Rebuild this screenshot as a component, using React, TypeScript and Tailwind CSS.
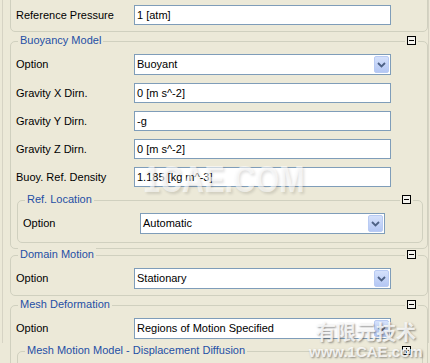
import { ReactNode } from "react";

type GroupProps = {
    title?: string,
    icon?: 'minus' | 'plus',
    className: string,
    children?: ReactNode
}

const ToggleBox = ({ kind }: { kind: 'minus' | 'plus' }) => (
    <span className="block w-[9px] h-[9px] border border-black bg-[#F4F3EE] relative">
        <span className="absolute left-[1px] top-[3px] w-[5px] h-[1px] bg-black" />
        {kind === 'plus' && <span className="absolute left-[3px] top-[1px] w-[1px] h-[5px] bg-black" />}
    </span>
)

const Group = ({ title, icon, className, children }: GroupProps) => (
    <div className={`relative border border-[#D0D0BF] rounded-[5px] ${className}`}>
        {title && (
            <span className="absolute -top-[8px] left-[7px] px-[2px] bg-[#ECE9D8] leading-[13px] text-[#1F4FA5] whitespace-nowrap">
                {title}
            </span>
        )}
        {icon && (
            <span className="absolute -top-[6px] right-[9px] px-[2px] bg-[#ECE9D8]">
                <ToggleBox kind={icon} />
            </span>
        )}
        {children}
    </div>
)

const Chevron = () => (
    <svg width="9" height="6" viewBox="0 0 9 6">
        <path d="M1 1 L4.5 4.5 L8 1" stroke="#4D6185" strokeWidth="1.8" fill="none" />
    </svg>
)

const TextField = ({ value, className = '' }: { value: string, className?: string }) => (
    <div className={`h-[20px] border border-[#7F9DB9] bg-white flex items-center pl-[2px] ${className}`}>
        {value}
    </div>
)

const Combo = ({ value, className = '' }: { value: string, className?: string }) => (
    <div className={`h-[21px] border border-[#7F9DB9] bg-white flex items-stretch ${className}`}>
        <span className="flex-1 flex items-center pl-[2px] whitespace-nowrap overflow-hidden">{value}</span>
        <span className="w-[15px] m-[1px] ml-0 rounded-[2px] border border-[#B9CBF3] bg-gradient-to-b from-[#D5E1FB] to-[#B4C7F4] flex items-center justify-center">
            <Chevron />
        </span>
    </div>
)

const Row = ({ label, children, cols = 'grid-cols-[118px_257px]', className = '' }: { label: string, children: ReactNode, cols?: string, className?: string }) => (
    <div className={`grid ${cols} items-center ${className}`}>
        <span className="whitespace-nowrap">{label}</span>
        {children}
    </div>
)

export default function App() {
    return (
        <div className="relative w-[430px] h-[363px] overflow-hidden bg-[#ECE9D8] font-['Liberation_Sans',Arial,sans-serif] text-[11px] text-black">
            <div className="ml-[2px] mr-[1px] h-full border-x border-[#D6D3C4] pl-[7px]">

                <Group className="-mt-[20px] h-[52px] pt-[24px] pl-[5px]">
                    <Row label="Reference Pressure">
                        <TextField value="1 [atm]" />
                    </Row>
                </Group>

                <Group title="Buoyancy Model" icon="minus" className="mt-[9px] h-[208px] pt-[12px]">
                    <div className="pl-[5px]">
                        <Row label="Option">
                            <Combo value="Buoyant" />
                        </Row>
                        <Row label="Gravity X Dirn." className="mt-[8px]">
                            <TextField value="0 [m s^-2]" />
                        </Row>
                        <Row label="Gravity Y Dirn." className="mt-[8px]">
                            <TextField value="-g" />
                        </Row>
                        <Row label="Gravity Z Dirn." className="mt-[8px]">
                            <TextField value="0 [m s^-2]" />
                        </Row>
                        <Row label="Buoy. Ref. Density" className="mt-[8px]">
                            <TextField value="1.185 [kg m^-3]" />
                        </Row>
                    </div>

                    <Group title="Ref. Location" icon="minus" className="mt-[13px] ml-[6px] mr-[4px] h-[43px] pt-[12px] pl-[5px]">
                        <Row label="Option" cols="grid-cols-[117px_245px]">
                            <Combo value="Automatic" />
                        </Row>
                    </Group>
                </Group>

                <Group title="Domain Motion" icon="minus" className="mt-[6px] h-[41px] pt-[12px] pl-[5px]">
                    <Row label="Option">
                        <Combo value="Stationary" />
                    </Row>
                </Group>

                <Group title="Mesh Deformation" icon="minus" className="mt-[9px] h-[120px] pt-[12px]">
                    <div className="pl-[5px]">
                        <Row label="Option">
                            <Combo value="Regions of Motion Specified" />
                        </Row>
                    </div>
                    <Group title="Mesh Motion Model - Displacement Diffusion" icon="plus" className="mt-[12px] ml-[6px] mr-[4px] h-[40px]" />
                </Group>
            </div>

            {/* watermark */}
            <div className="pointer-events-none absolute left-[143px] top-[158px] origin-left scale-x-[0.85] text-[36px] leading-[44px] font-bold text-white/60 font-['Liberation_Sans',Arial,sans-serif] [text-shadow:2px_2px_3px_rgba(0,0,0,0.12)]">
                1CAE.COM
            </div>
            <div className="pointer-events-none absolute left-[316px] top-[320px] text-[20px] font-bold leading-[24px] text-white/80 font-['Noto_Sans_CJK_SC',sans-serif] [text-shadow:1px_1px_2px_rgba(60,60,60,0.55)]">
                有限元技术
            </div>
            <div className="pointer-events-none absolute left-[309px] top-[343px] text-[15px] font-bold leading-[18px] text-white/80 font-['Liberation_Sans',Arial,sans-serif] [text-shadow:1px_1px_2px_rgba(60,60,60,0.55)]">
                www.1CAE.com
            </div>
        </div>
    )
}
